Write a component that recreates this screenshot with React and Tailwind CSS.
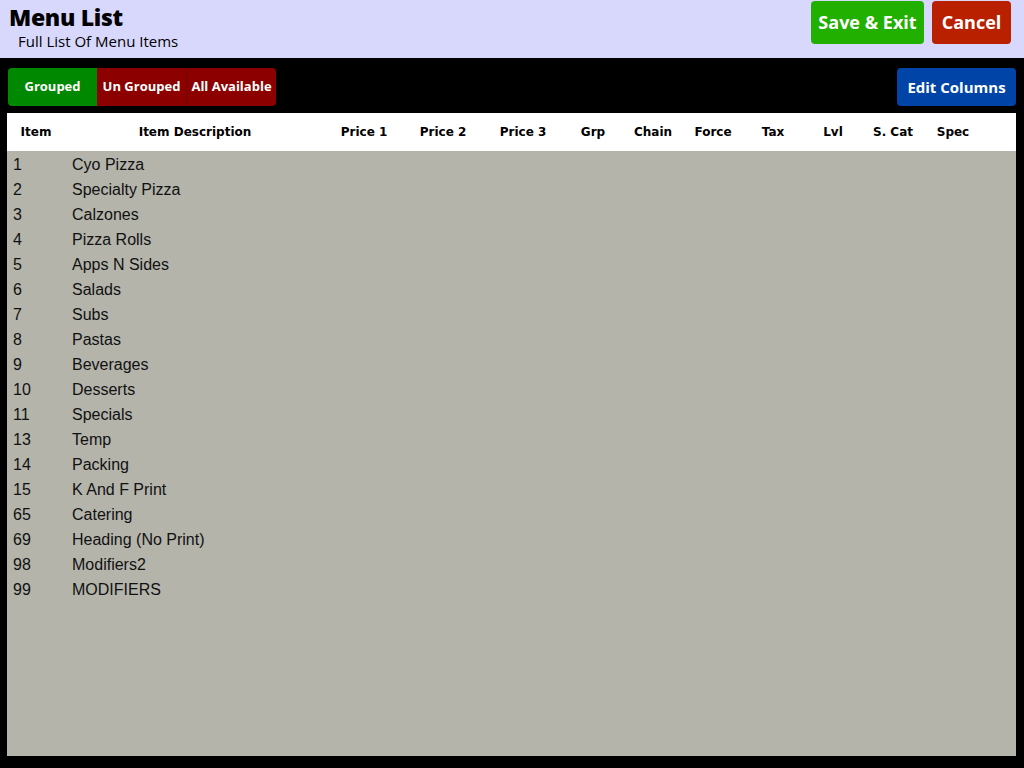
import React from "react";

const columns = [
  "Item",
  "Item Description",
  "Price 1",
  "Price 2",
  "Price 3",
  "Grp",
  "Chain",
  "Force",
  "Tax",
  "Lvl",
  "S. Cat",
  "Spec",
];

const items = [
  [1, "Cyo Pizza"],
  [2, "Specialty Pizza"],
  [3, "Calzones"],
  [4, "Pizza Rolls"],
  [5, "Apps N Sides"],
  [6, "Salads"],
  [7, "Subs"],
  [8, "Pastas"],
  [9, "Beverages"],
  [10, "Desserts"],
  [11, "Specials"],
  [13, "Temp"],
  [14, "Packing"],
  [15, "K And F Print"],
  [65, "Catering"],
  [69, "Heading (No Print)"],
  [98, "Modifiers2"],
  [99, "MODIFIERS"],
];

const grid =
  "grid grid-cols-[58px_260px_78px_80px_80px_60px_60px_60px_60px_60px_60px_60px_1fr]";

export default function App() {
  return (
    <div className="w-[1024px] h-[768px] bg-black flex flex-col overflow-hidden font-['Open_Sans',sans-serif]">
      {/* title bar */}
      <div className="h-[58px] bg-[#d8d8fc] flex justify-between shrink-0">
        <div className="pl-[9px] pt-[2px]">
          <div className="text-[23px] font-extrabold leading-[30px] text-black tracking-[-0.3px]">
            Menu List
          </div>
          <div className="pl-[9px] text-[15px] leading-[18px] text-black">
            Full List Of Menu Items
          </div>
        </div>
        <div className="flex gap-2 pt-px pr-[13px]">
          <button className="w-[113px] h-[43px] rounded bg-[#22b000] text-white font-bold text-[18px]">
            Save &amp; Exit
          </button>
          <button className="w-[79px] h-[43px] rounded bg-[#b82000] text-white font-bold text-[18px]">
            Cancel
          </button>
        </div>
      </div>

      {/* toolbar */}
      <div className="h-[55px] flex items-start justify-between pt-[10px] pl-[8px] pr-[8px] shrink-0">
        <div className="flex h-[38px] rounded overflow-hidden text-white font-bold text-[13px]">
          <button className="w-[89px] bg-[#008800]">Grouped</button>
          <button className="w-[90px] bg-[#8c0000] border-r border-[#6e0000]">
            Un Grouped
          </button>
          <button className="w-[89px] bg-[#8c0000]">All Available</button>
        </div>
        <button className="w-[119px] h-[38px] rounded bg-[#0044a8] text-white font-bold text-[15px]">
          Edit Columns
        </button>
      </div>

      {/* table */}
      <div className="flex-1 ml-[7px] mr-[8px] mb-[12px] bg-[#b4b4ab] flex flex-col">
        <div
          className={`${grid} h-[38px] bg-white items-center text-[12px] font-bold text-black font-['DejaVu_Sans',sans-serif]`}
        >
          {columns.map((c) => (
            <div key={c} className="text-center">
              {c}
            </div>
          ))}
        </div>
        <div className="pt-px font-['Liberation_Sans',Arial,sans-serif] text-[16px] text-[#111]">
          {items.map(([id, name]) => (
            <div key={id} className={`${grid} h-[25px] items-center`}>
              <div className="pl-[6px]">{id}</div>
              <div className="pl-[7px]">{name}</div>
            </div>
          ))}
        </div>
      </div>
    </div>
  );
}
